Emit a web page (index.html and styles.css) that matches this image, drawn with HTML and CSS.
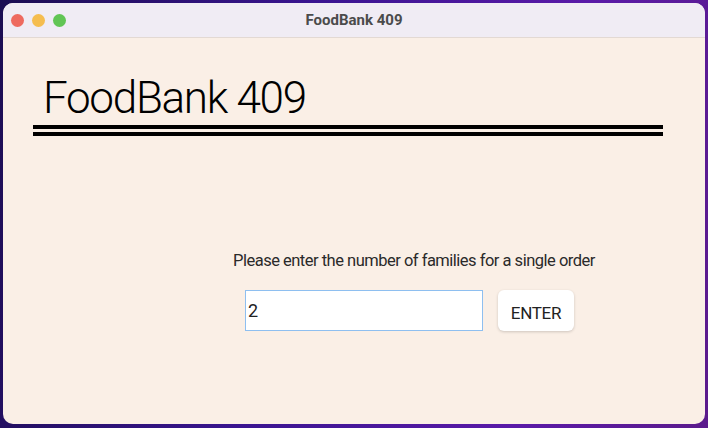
FILE: index.html
```html
<!DOCTYPE html>
<html>
<head>
<meta charset="utf-8">
<link rel="stylesheet" href="styles.css">
</head>
<body>
<div class="window">
  <div class="titlebar">
    <div class="lights">
      <span class="light red"></span>
      <span class="light yellow"></span>
      <span class="light green"></span>
    </div>
    <div class="title">FoodBank 409</div>
  </div>
  <div class="content">
    <div class="header">
      <h1 class="heading">FoodBank 409</h1>
      <div class="rule"></div>
      <div class="rule second"></div>
    </div>
    <div class="form">
      <div class="prompt">Please enter the number of families for a single order</div>
      <div class="row">
        <input class="field" type="text" value="2">
        <button class="enter">ENTER</button>
      </div>
    </div>
  </div>
</div>
</body>
</html>
```
FILE: styles.css
```css
html, body {
  margin: 0;
  padding: 0;
  height: 100%;
}
body {
  background: linear-gradient(100deg, #1b0d52 0%, #3a1590 40%, #5a1aa8 75%, #5b1b8c 100%);
  font-family: Roboto, "Liberation Sans", sans-serif;
  overflow: hidden;
}
.window {
  position: relative;
  margin: 3px 3px 0 3px;
  height: 421px;
  border-radius: 10px;
  overflow: hidden;
  background: #faefe6;
  display: flex;
  flex-direction: column;
}
.titlebar {
  height: 34px;
  background: #f0ecf4;
  border-bottom: 1px solid #e3d9d3;
  display: flex;
  align-items: center;
  position: relative;
  flex: none;
}
.lights {
  display: flex;
  gap: 8px;
  padding-left: 8px;
}
.light {
  width: 13px;
  height: 13px;
  border-radius: 50%;
  display: block;
}
.red { background: #ee6a5f; }
.yellow { background: #f5bd4f; }
.green { background: #61c554; }
.title {
  position: absolute;
  left: 0;
  right: 0;
  text-align: center;
  font-weight: 700;
  font-size: 15px;
  color: #4b4b4b;
}
.content {
  flex: 1;
  display: flex;
  flex-direction: column;
}
.header {
  padding: 36px 42px 0 30px;
}
.heading {
  margin: 0 0 0 10px;
  font-weight: 300;
  font-size: 44px;
  letter-spacing: -1.3px;
  line-height: 48px;
  color: #000;
}
.rule {
  height: 4px;
  background: #000;
  margin-top: 3px;
}
.rule.second {
  margin-top: 3px;
}
.form {
  padding: 115px 0 0 230px;
  display: flex;
  flex-direction: column;
}
.prompt {
  font-size: 16.5px;
  letter-spacing: -0.5px;
  line-height: 20px;
  color: #2a2a2a;
}
.row {
  display: flex;
  gap: 15px;
  margin-top: 19px;
  padding-left: 12px;
}
.field {
  width: 238px;
  height: 41px;
  box-sizing: border-box;
  border: 1px solid #8ebff0;
  background: #fff;
  padding: 0 2px;
  font-family: Roboto, "Liberation Sans", sans-serif;
  font-size: 18px;
  color: #222;
  outline: none;
  margin: 0;
}
.enter {
  width: 76px;
  height: 41px;
  border: none;
  border-radius: 6px;
  background: #fff;
  box-shadow: 0 1px 3px rgba(0,0,0,0.18);
  font-family: Roboto, "Liberation Sans", sans-serif;
  font-size: 17px;
  letter-spacing: -0.3px;
  color: #222;
  padding: 4px 0 0;
  margin: 0;
}
```
